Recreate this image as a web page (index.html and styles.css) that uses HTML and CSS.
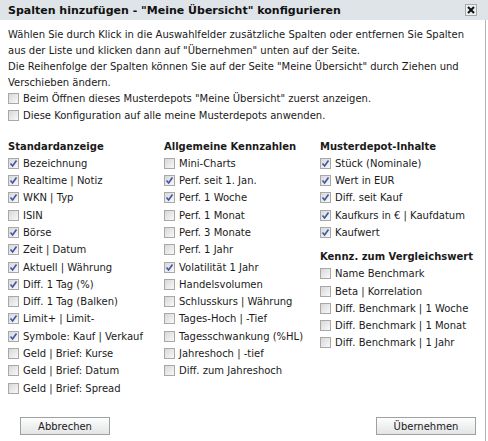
FILE: index.html
```html
<!DOCTYPE html>
<html lang="de">
<head>
    <meta charset="UTF-8">
    <title>Spalten hinzufügen</title>
    <link rel="stylesheet" href="styles.css">
</head>
<body>
    <div class="dialog">
        <div class="titlebar">
            <span class="title">Spalten hinzufügen - "Meine Übersicht" konfigurieren</span>
            <span class="close"><svg width="8" height="8" viewBox="0 0 8 8"><path d="M1 1 L7 7 M7 1 L1 7" stroke="#111" stroke-width="2"/></svg></span>
        </div>
        <div class="content">
            <p class="intro">Wählen Sie durch Klick in die Auswahlfelder zusätzliche Spalten oder entfernen Sie Spalten aus der Liste und klicken dann auf "Übernehmen" unten auf der Seite.<br>Die Reihenfolge der Spalten können Sie auf der Seite "Meine Übersicht" durch Ziehen und Verschieben ändern.</p>

            <div class="options" id="options"></div>

            <div class="columns">
                <div class="col" id="col1"><h3>Standardanzeige</h3></div>
                <div class="col" id="col2"><h3>Allgemeine Kennzahlen</h3></div>
                <div class="col" id="col3"><h3>Musterdepot-Inhalte</h3></div>
            </div>

            <div class="buttons">
                <button type="button" class="btn btn-cancel">Abbrechen</button>
                <button type="button" class="btn btn-ok">Übernehmen</button>
            </div>
        </div>
    </div>

    <script>
        const check = '<svg width="9" height="9" viewBox="0 0 9 9"><path d="M1.5 4.5 L3.6 7 L7.5 1.5" fill="none" stroke="#3c55a5" stroke-width="1.6"/></svg>';

        function row(label, on) {
            return `<label class="row"><span class="box">${on ? check : ''}</span><span>${label}</span></label>`;
        }

        const options = [
            ["Beim Öffnen dieses Musterdepots \"Meine Übersicht\" zuerst anzeigen.", false],
            ["Diese Konfiguration auf alle meine Musterdepots anwenden.", false]
        ];

        const col1 = [
            ["Bezeichnung", true], ["Realtime | Notiz", true], ["WKN | Typ", true], ["ISIN", false],
            ["Börse", true], ["Zeit | Datum", true], ["Aktuell | Währung", true], ["Diff. 1 Tag (%)", true],
            ["Diff. 1 Tag (Balken)", false], ["Limit+ | Limit-", true], ["Symbole: Kauf | Verkauf", true],
            ["Geld | Brief: Kurse", false], ["Geld | Brief: Datum", false], ["Geld | Brief: Spread", false]
        ];

        const col2 = [
            ["Mini-Charts", false], ["Perf. seit 1. Jan.", true], ["Perf. 1 Woche", true], ["Perf. 1 Monat", false],
            ["Perf. 3 Monate", false], ["Perf. 1 Jahr", false], ["Volatilität 1 Jahr", true], ["Handelsvolumen", false],
            ["Schlusskurs | Währung", false], ["Tages-Hoch | -Tief", false], ["Tagesschwankung (%HL)", false],
            ["Jahreshoch | -tief", false], ["Diff. zum Jahreshoch", false]
        ];

        const col3 = [
            ["Stück (Nominale)", true], ["Wert in EUR", true], ["Diff. seit Kauf", true],
            ["Kaufkurs in € | Kaufdatum", true], ["Kaufwert", true]
        ];

        const col3b = [
            ["Name Benchmark", false], ["Beta | Korrelation", false], ["Diff. Benchmark | 1 Woche", false],
            ["Diff. Benchmark | 1 Monat", false], ["Diff. Benchmark | 1 Jahr", false]
        ];

        document.getElementById("options").innerHTML = options.map(o => row(o[0], o[1])).join("");
        document.getElementById("col1").innerHTML += col1.map(o => row(o[0], o[1])).join("");
        document.getElementById("col2").innerHTML += col2.map(o => row(o[0], o[1])).join("");
        document.getElementById("col3").innerHTML += col3.map(o => row(o[0], o[1])).join("")
            + '<h3 class="sub">Kennz. zum Vergleichswert</h3>'
            + col3b.map(o => row(o[0], o[1])).join("");
    </script>
</body>
</html>
```

FILE: styles.css
```css
body { margin: 0; font-family: "DejaVu Sans", Verdana, sans-serif; font-size: 10px; color: #1a1a1a; background: #fff; }
.dialog { width: 486px; height: 441px; border-right: 1px solid #b4b4b4; box-sizing: border-box; display: flex; flex-direction: column; }
.titlebar { height: 20px; background: #dfe4e8; display: flex; align-items: center; justify-content: space-between; padding: 0 6px 0 8px; width: 488px; box-sizing: border-box; }
.title { font-weight: bold; font-size: 11px; color: #111; }
.close { width: 12px; height: 12px; box-sizing: border-box; border: 1px solid #a8a8a8; background: #eceff2; display: flex; align-items: center; justify-content: center; margin-right: 5px; }
.content { padding: 7px 8px 0 8px; flex: 1; display: flex; flex-direction: column; }
.intro { margin: 0 0 -1px 0; line-height: 16px; }
.options { margin-bottom: 14px; }
.row { display: flex; align-items: center; gap: 4px; height: 17.3px; white-space: nowrap; }
.box { width: 11px; height: 11px; box-sizing: border-box; border: 1px solid #a8a8a8; background: linear-gradient(135deg, #d8d8d8, #f8f8f8); display: flex; align-items: center; justify-content: center; flex-shrink: 0; }
.columns { display: grid; grid-template-columns: 156px 156px 1fr; }
h3 { margin: 0; font-size: 10px; font-weight: bold; height: 16px; line-height: 16px; white-space: nowrap; }
h3.sub { margin-top: 8px; }
.buttons { display: flex; justify-content: space-between; padding: 0 1px 0 12px; margin-top: auto; margin-bottom: 6px; }
.btn { height: 18px; font-family: "DejaVu Sans", Verdana, sans-serif; font-size: 10px; color: #1a1a1a; border: 1px solid #a0a0a0; background: linear-gradient(#fdfdfd, #e2e4e6); padding: 0; cursor: pointer; }
.btn-cancel { width: 90px; }
.btn-ok { width: 100px; }
```
